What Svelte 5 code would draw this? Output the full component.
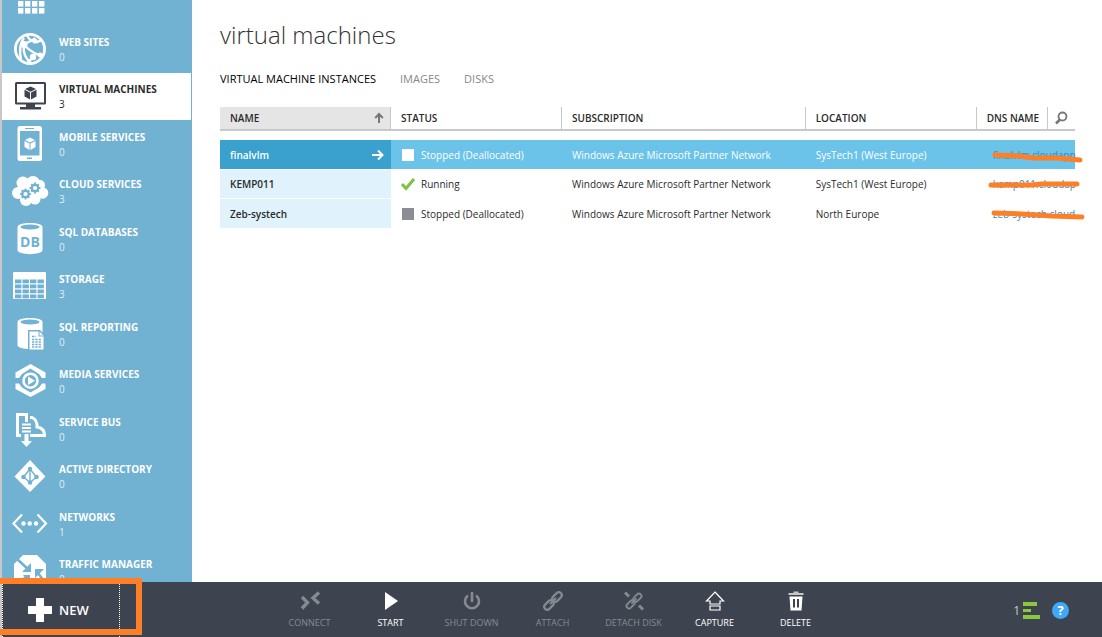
<script>
  const services = [
    { id: 'all', label: '', count: '' },
    { id: 'web', label: 'WEB SITES', count: 0 },
    { id: 'vm', label: 'VIRTUAL MACHINES', count: 3 },
    { id: 'mobile', label: 'MOBILE SERVICES', count: 0 },
    { id: 'cloud', label: 'CLOUD SERVICES', count: 3 },
    { id: 'db', label: 'SQL DATABASES', count: 0 },
    { id: 'storage', label: 'STORAGE', count: 3 },
    { id: 'reporting', label: 'SQL REPORTING', count: 0 },
    { id: 'media', label: 'MEDIA SERVICES', count: 0 },
    { id: 'bus', label: 'SERVICE BUS', count: 0 },
    { id: 'ad', label: 'ACTIVE DIRECTORY', count: 0 },
    { id: 'net', label: 'NETWORKS', count: 1 },
    { id: 'traffic', label: 'TRAFFIC MANAGER', count: 0 }
  ];

  const machines = [
    {
      name: 'finalvlm', status: 'Stopped (Deallocated)', state: 'stopped', location: 'SysTech1 (West Europe)',
      dns: 'finalvlm.cloudapp', stroke: 'M18 14 L42 15 L56 17 L80 17 L103 19'
    },
    {
      name: 'KEMP011', status: 'Running', state: 'running', location: 'SysTech1 (West Europe)',
      dns: 'kemp011.cloudap', stroke: 'M14 15 L55 15 L64 14 L100 14'
    },
    {
      name: 'Zeb-systech', status: 'Stopped (Deallocated)', state: 'stopped', location: 'North Europe',
      dns: 'zeb-systech.cloud', stroke: 'M17 14 L45 15 L75 17 L105 18'
    }
  ];

  const commands = [
    { id: 'connect', label: 'CONNECT', enabled: false },
    { id: 'start', label: 'START', enabled: true },
    { id: 'shutdown', label: 'SHUT DOWN', enabled: false },
    { id: 'attach', label: 'ATTACH', enabled: false },
    { id: 'detach', label: 'DETACH DISK', enabled: false },
    { id: 'capture', label: 'CAPTURE', enabled: true },
    { id: 'delete', label: 'DELETE', enabled: true }
  ];

  const tabs = ['VIRTUAL MACHINE INSTANCES', 'IMAGES', 'DISKS'];
  let activeService = $state('vm');
  let activeTab = $state(tabs[0]);
  let selected = $state('finalvlm');

  const teeth = [0, 45, 90, 135, 180, 225, 270, 315];
</script>

{#snippet gear(x, y)}
  <g transform="translate({x} {y})" class="cut-line">
    <circle r="3.2" stroke-width="2.2" />
    {#each teeth as a}
      <path d="M0 -3.6V-5.4" stroke-width="2" transform="rotate({a})" />
    {/each}
  </g>
{/snippet}

{#snippet serviceIcon(id)}
  <svg class="service-icon" viewBox="0 0 38 38" width="38" height="38" aria-hidden="true">
    {#if id === 'all'}
      {#each [0, 1, 2, 3] as r}
        {#each [0, 1, 2, 3] as c}
          <rect x={7 + c * 7} y={5 + r * 7} width="5.4" height="5.6" />
        {/each}
      {/each}
    {:else if id === 'web'}
      <circle cx="19" cy="19" r="14.6" class="line" stroke-width="2.8" />
      <path class="line" stroke-width="2.4" d="M16 5C17 9 20 11 26 12L31 10M13 8C9 13 8 20 10 30M13 14C18 12 21 11 24 8M13 15C18 20 23 24 31 26M13 16C12 22 14 28 20 33M24 28L16 31" />
      <circle cx="13" cy="14.5" r="3.6" />
      <circle cx="24" cy="11" r="2.6" />
      <circle cx="29" cy="25" r="2.4" />
      <circle cx="22" cy="27" r="3.2" />
    {:else if id === 'vm'}
      <path fill-rule="evenodd" d="M5.5 5H33.5Q35 5 35 6.500V26Q35 27.500 33.500 27.500H5.500Q4 27.500 4 26V6.500Q4 5 5.500 5ZM6 7V25.500H33V7Z" />
      <path d="M15 27H24V30H30V32.500H9V30H15Z" />
      <path d="M19.500 9.500L25 12L19.500 14.700L14 12ZM13.500 12.800L19 15.500V22.500L13.500 19.500ZM25.500 12.800L20 15.500V22.500L25.500 19.500Z" />
    {:else if id === 'mobile'}
      <path fill-rule="evenodd" d="M9 1H28.500Q31 1 31 3.500V33.500Q31 36 28.500 36H9Q6.500 36 6.500 33.500V3.500Q6.500 1 9 1ZM9 6V30.500H28.500V6ZM14 3V4H23V3ZM16 32.500V34H21V32.500Z" />
      <path d="M19 12.500L24 15L19 17.500L14 15ZM13.500 16L18.500 18.500V25L13.500 22ZM24.500 16L19.500 18.500V25L24.500 22Z" />
    {:else if id === 'cloud'}
      <circle cx="7" cy="21" r="6" />
      <circle cx="12" cy="11" r="6.500" />
      <circle cx="22" cy="11" r="7" />
      <circle cx="29" cy="13" r="5" />
      <circle cx="31.500" cy="21" r="5.800" />
      <circle cx="15" cy="28" r="6" />
      <circle cx="24" cy="27" r="5.500" />
      <circle cx="19" cy="19" r="9" />
      {@render gear(14.500, 22)}
      {@render gear(24, 16)}
    {:else if id === 'db'}
      <path d="M6.500 7C6.500 1.700 31.500 1.700 31.500 7V30C31.500 35.500 6.500 35.500 6.500 30Z" />
      <ellipse cx="19" cy="7" rx="9.500" ry="2.600" class="cut" />
      <text x="19" y="26.500" text-anchor="middle" class="db-text">DB</text>
    {:else if id === 'storage'}
      <rect x="2" y="5" width="33" height="27" rx="1" />
      {#each [0, 1, 2, 3] as r}
        {#each [0, 1, 2, 3] as c}
          <rect class="cut" x={4 + c * 7.500} y={12.500 + r * 5} width="6.400" height="3.800" />
        {/each}
      {/each}
    {:else if id === 'reporting'}
      <path d="M6.500 7C6.500 1.700 31.500 1.700 31.500 7V30C31.500 35.500 6.500 35.500 6.500 30Z" />
      <ellipse cx="19" cy="7" rx="9.500" ry="2.600" class="cut" />
      <path class="cut" d="M17 15H29L34 20V36H17Z" />
      <path d="M18.500 16.500H27.500V21.500H32.500V34.500H18.500Z" />
      <path d="M28.500 16.500L32.500 20.500H28.500Z" />
      <path class="cut-line" stroke-width="1.300" d="M21 21.500H25M21 24.500H30M21 27H30M21 29.500H30M21 32H30" stroke-dasharray="2.300 1" />
    {:else if id === 'media'}
      <path d="M19.500 2L34.500 10.500V16H31L28 12L19.500 6.500L11 12L8 16H4.500V10.500Z" />
      <path d="M19.500 35L34.500 27V21.500H31L28 25.500L19.500 30.500L11 25.500L8 21.500H4.500V27Z" />
      <circle cx="19.500" cy="18.700" r="7" class="line" stroke-width="2.600" />
      <path d="M17 14.500L24 18.700L17 23Z" />
    {:else if id === 'bus'}
      <path class="line" stroke-width="3" d="M10 25.500H6.500V4.500H15.500V12M19 7.500H21Q26.500 10 26 17Q33.500 18 33.500 25.500H19" />
      <path class="line" stroke-width="2" d="M11 14.500H20M11 18H20M11 21.500H20" />
      <path d="M13.500 24H17.500V31H21L15.500 37L10 31H13.500Z" />
    {:else if id === 'ad'}
      <path d="M19 3L34.500 19.500L19 35L3.500 19.500Z" />
      <path class="cut-line" stroke-width="1.400" d="M19 12L12.500 20L19 25.500L25.500 20ZM19 12V25.500" />
      <g class="cut">
        <circle cx="19" cy="12" r="2.300" /><circle cx="12.500" cy="20" r="2.300" />
        <circle cx="25.500" cy="20" r="2.300" /><circle cx="19" cy="25.500" r="2.300" />
      </g>
    {:else if id === 'net'}
      <path class="line" stroke-width="2.200" d="M11 9.500L2.500 18.500L11 27.500M26.500 9.500L35 18.500L26.500 27.500" />
      <circle cx="12.500" cy="18.500" r="2.200" /><circle cx="18.700" cy="18.500" r="2.200" /><circle cx="25" cy="18.500" r="2.200" />
    {:else}
      <path d="M12 3H26L35 12V26L26 35H12L3 26V12Z" />
      <path class="cut-line" stroke-width="2.600" d="M6 7L18 18M34 30L26 20M9 30L15 25" />
      <path class="cut" d="M20 11V20H11ZM24 17H33L24 26ZM12 23H19V31Z" />
    {/if}
  </svg>
{/snippet}

{#snippet commandIcon(id)}
  <svg viewBox="0 0 24 24" width="24" height="24" aria-hidden="true">
    {#if id === 'connect'}
      <path class="line" stroke-width="3.400" d="M4 8L9.500 13.500L4 19.500M21 3.500L15 9L21 14.500" />
    {:else if id === 'start'}
      <path d="M6 3L19 12L6 21Z" />
    {:else if id === 'shutdown'}
      <path class="line" stroke-width="2.600" d="M8 6.500A7 7 0 1 0 16 6.500" />
      <path class="line" stroke-width="2.600" stroke-linecap="round" d="M12 4V12" />
    {:else if id === 'attach' || id === 'detach'}
      <g class="line" stroke-width="2.200" transform={id === 'detach' ? 'translate(1.800 1.800) scale(.85)' : ''}>
        <rect x="-5.500" y="-3" width="11" height="6" rx="3" transform="translate(8 16) rotate(-45)" />
        <rect x="-5.500" y="-3" width="11" height="6" rx="3" transform="translate(16 8) rotate(-45)" />
        <path d="M9 15L15 9" />
      </g>
      {#if id === 'detach'}
        <path class="line" stroke-width="3" d="M3 3.500L7 7.500M17 16.500L21 20.500" />
      {/if}
    {:else if id === 'capture'}
      <path class="line" stroke-width="1.200" d="M12 3L20.500 12H17V15H7V12H3.500ZM7 17H17V21H7Z" />
    {:else}
      <path class="lid" d="M4.500 4H9.500V2.500H14.500V4H19.500V6H4.500Z" />
      <path fill-rule="evenodd" d="M5.500 7.500H18.500L17.500 21.500H6.500ZM9 10V18.500H11V10ZM13 10V18.500H15V10Z" />
    {/if}
  </svg>
{/snippet}

<div class="portal">
  <nav class="sidebar" aria-label="Services">
    <ul>
      {#each services as s}
        <li>
          <button class:active={activeService === s.id} onclick={() => (activeService = s.id)}>
            {@render serviceIcon(s.id)}
            <span class="service-text">
              <span class="service-label">{s.label}</span>
              <span class="service-count">{s.count}</span>
            </span>
          </button>
        </li>
      {/each}
    </ul>
  </nav>

  <main>
    <h1>virtual machines</h1>
    <div class="tabs" role="tablist">
      {#each tabs as t}
        <button role="tab" aria-selected={activeTab === t} class:current={activeTab === t} onclick={() => (activeTab = t)}>{t}</button>
      {/each}
    </div>

    <table>
      <colgroup>
        <col class="c-std" /><col class="c-std" /><col class="c-sub" /><col class="c-std" /><col /><col class="c-find" />
      </colgroup>
      <thead>
        <tr>
          <th class="sorted" aria-sort="ascending">
            <div class="spread">
              NAME
              <svg viewBox="0 0 10 12" width="10" height="12" aria-hidden="true"><path class="line" stroke-width="2" d="M5 11V2M1.200 6L5 2L8.800 6" /></svg>
            </div>
          </th>
          <th>STATUS</th>
          <th>SUBSCRIPTION</th>
          <th>LOCATION</th>
          <th>DNS NAME</th>
          <th class="find">
            <button aria-label="Search">
              <svg viewBox="0 0 14 14" width="14" height="14" aria-hidden="true"><circle cx="8.500" cy="5.500" r="4" class="line" stroke-width="1.800" /><path class="line" stroke-width="2.600" d="M6 8.500L2 12.500" /></svg>
            </button>
          </th>
        </tr>
      </thead>
      <tbody>
        <tr class="gap"><td colspan="6"></td></tr>
        {#each machines as m}
          <tr class:selected={selected === m.name} onclick={() => (selected = m.name)}>
            <td class="name">
              <div class="spread">
                {m.name}
                {#if selected === m.name}
                  <svg viewBox="0 0 12 12" width="12" height="12" aria-hidden="true"><path class="line" stroke-width="2" d="M0 6H11M6 1.500L10.500 6L6 10.500" /></svg>
                {/if}
              </div>
            </td>
            <td>
              <div class="status">
                <svg viewBox="0 0 14 14" width="14" height="14" aria-hidden="true">
                  {#if m.state === 'running'}
                    <path class="tick" d="M1 7L5 11.500L13 2" />
                  {:else}
                    <rect class="block" x="1" y="1" width="12" height="12" />
                  {/if}
                </svg>
                {m.status}
              </div>
            </td>
            <td>Windows Azure Microsoft Partner Network</td>
            <td>{m.location}</td>
            <td class="dns" colspan="2">
              <a href="#{m.name}">{m.dns}</a>
              <svg class="scribble" viewBox="0 0 110 29" width="110" height="29" aria-hidden="true"><path d={m.stroke} /></svg>
            </td>
          </tr>
        {/each}
      </tbody>
    </table>
  </main>

  <footer>
    <button class="new">
      <svg viewBox="0 0 24 24" width="24" height="24" aria-hidden="true"><path d="M8 0H16V8H24V16H16V24H8V16H0V8H8Z" /></svg>
      NEW
    </button>
    <div class="marker"></div>
    <div class="commands">
      {#each commands as c}
        <button disabled={!c.enabled}>
          {@render commandIcon(c.id)}
          <span>{c.label}</span>
        </button>
      {/each}
    </div>
    <div class="tray">
      <button class="jobs" aria-label="1 notification">
        1
        <svg viewBox="0 0 18 18" width="18" height="18" aria-hidden="true"><path d="M1 1H15V5H1ZM1 8H9V11H1ZM1 14H18V18H1Z" /></svg>
      </button>
      <button class="help" aria-label="Help">?</button>
    </div>
  </footer>
</div>

<style>
  :global(body) {
    margin: 0;
    background: #fff;
  }

  .portal {
    display: grid;
    grid-template: minmax(0, 1fr) 55px / 192px minmax(0, 1fr);
    height: 100vh;
    overflow: hidden;
    font-family: "Open Sans", "Noto Sans", sans-serif;
    font-size: 10px;
    color: #2b2b2b;
  }

  button {
    font: inherit;
    color: inherit;
    background: none;
    border: 0;
    padding: 0;
    cursor: pointer;
  }

  svg {
    display: block;
    flex: none;
    fill: currentColor;
  }

  .line {
    fill: none;
    stroke: currentColor;
  }

  /* service list */
  .sidebar {
    box-sizing: border-box;
    background: #71b1d1;
    border-left: 2px solid #c8c8c8;
    padding-right: 1px;
    overflow: hidden;
    color: #fff;
  }

  ul {
    list-style: none;
    margin: -22px 0 0;
    padding: 0;
  }

  li {
    height: 47px;
  }

  li:nth-child(odd) {
    height: 48px;
  }

  li button {
    display: flex;
    align-items: flex-start;
    gap: 10px;
    box-sizing: border-box;
    width: 100%;
    height: 47px;
    padding: 4px 0 0 9px;
    text-align: left;
    --hole: #71b1d1;
  }

  li button.active {
    background: #fff;
    color: #2b2b2b;
  }

  .active .service-icon {
    color: #3e444f;
  }

  .cut {
    fill: var(--hole);
  }

  .cut-line {
    fill: none;
    stroke: var(--hole);
  }

  .db-text {
    fill: var(--hole);
    font-size: 14px;
    font-weight: 700;
  }

  .service-text {
    display: flex;
    flex-direction: column;
    padding-top: 5px;
  }

  .service-label {
    font-weight: 700;
    line-height: 15px;
  }

  .service-count {
    line-height: 15px;
    opacity: 0.8;
  }

  .active .service-count {
    opacity: 1;
  }

  /* content */
  main {
    padding: 18px 27px 0 28px;
  }

  h1 {
    margin: 0;
    font-size: 24px;
    line-height: 34px;
    font-weight: 300;
    color: #333;
  }

  .tabs {
    display: flex;
    gap: 24px;
    margin: 18px 0 19px;
    font-size: 11px;
    line-height: 18px;
    color: #888;
  }

  .tabs .current {
    color: #000;
  }

  table {
    width: 100%;
    table-layout: fixed;
    border-collapse: separate;
    border-spacing: 0;
  }

  .c-std {
    width: 20%;
  }

  .c-sub {
    width: 28.5%;
  }

  .c-find {
    width: 27px;
  }

  th,
  td {
    box-sizing: border-box;
    padding: 0 0 0 10px;
    text-align: left;
    white-space: nowrap;
  }

  th {
    height: 24px;
    border-bottom: 2px solid #c8c8c8;
    border-right: 1px solid #c8c8c8;
    font-weight: 600;
  }

  th.sorted {
    background: #e5e5e5;
    padding-right: 6px;
  }

  th.sorted svg,
  .find {
    color: #777;
  }

  th.find {
    border-right: 0;
    padding: 0 6px;
  }

  .find button {
    display: block;
  }

  .spread {
    display: flex;
    justify-content: space-between;
    align-items: center;
  }

  td {
    height: 29px;
    border-top: 1px solid #fff;
  }

  tr:last-child td {
    height: 30px;
  }

  .gap td {
    height: 9px;
    border: 0;
  }

  .name {
    background: #e0f3fc;
    font-weight: 600;
    padding-right: 7px;
  }

  .selected td {
    background: #6bc3e9;
    border-top-color: #6bc3e9;
    color: #fff;
  }

  .selected .name {
    background: #3aa0cd;
    border-top-color: #3aa0cd;
  }

  .status {
    display: flex;
    align-items: center;
    gap: 6px;
  }

  .block {
    fill: #8a8d94;
  }

  .selected .block {
    fill: #fff;
  }

  .tick {
    fill: none;
    stroke: #7fc241;
    stroke-width: 3;
  }

  .dns {
    position: relative;
    padding: 0 0 0 16px;
  }

  .dns a {
    display: block;
    color: #2a8dbb;
    text-decoration: none;
  }

  .scribble {
    position: absolute;
    left: 0;
    top: 0;
    pointer-events: none;
  }

  .scribble path {
    fill: none;
    stroke: #ff7f27;
    stroke-width: 5;
    stroke-linecap: round;
    stroke-linejoin: round;
  }

  /* command bar */
  footer {
    grid-column: 1 / -1;
    position: relative;
    display: flex;
    background: #3e444f;
    border-left: 2px solid #c8c8c8;
    color: #fff;
  }

  .new {
    display: flex;
    align-items: center;
    gap: 7px;
    box-sizing: border-box;
    width: 118px;
    padding: 1px 0 0 25px;
    border: dotted #fff;
    border-width: 0 1px;
    font-size: 13px;
    font-weight: 600;
  }

  .marker {
    position: absolute;
    left: -8px;
    top: -4px;
    width: 136px;
    height: 45px;
    border: 6px solid #ff7f27;
    pointer-events: none;
  }

  .commands {
    display: flex;
    margin-left: 149px;
  }

  .commands button {
    display: flex;
    flex-direction: column;
    align-items: center;
    gap: 3px;
    width: 81px;
    padding-top: 7px;
    font-size: 9px;
    line-height: 14px;
  }

  .commands button:disabled {
    color: #858a92;
    cursor: default;
  }

  .lid {
    fill: #c4c6ca;
  }

  .tray {
    display: flex;
    align-items: center;
    gap: 12px;
    margin-left: auto;
    padding: 1px 33px 0 0;
  }

  .jobs {
    display: flex;
    align-items: center;
    gap: 2px;
    font-size: 12px;
    color: #c8c8c8;
  }

  .jobs svg {
    fill: #8cc83c;
  }

  .help {
    width: 17px;
    height: 17px;
    border-radius: 50%;
    background: #3fa9f5;
    color: #fff;
    font-size: 13px;
    font-weight: 700;
    line-height: 17px;
  }
</style>
